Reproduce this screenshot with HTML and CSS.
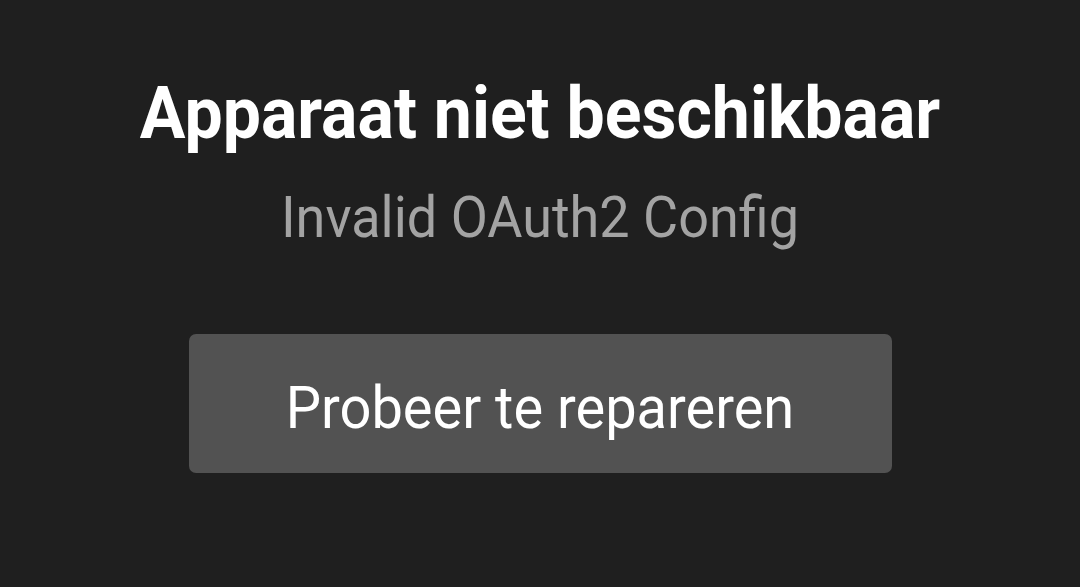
FILE: index.html
```html
<!DOCTYPE html>
<html lang="nl">
<head>
  <meta charset="UTF-8" />
  <meta name="viewport" content="width=device-width, initial-scale=1.0"/>
  <title>Apparaat niet beschikbaar</title>
  <link rel="stylesheet" href="styles.css">
</head>
<body>
  <div class="panel">
    <h1 class="title"><span class="stretch">Apparaat niet beschikbaar</span></h1>
    <p class="reason"><span class="stretch">Invalid OAuth2 Config</span></p>
    <button class="repair"><span class="stretch">Probeer te repareren</span></button>
  </div>
</body>
</html>
```

FILE: styles.css
```css
body {
  margin: 0;
  padding: 0;
  background: #1f1f1f;
  font-family: Roboto, 'Noto Sans', sans-serif;
  height: 100vh;
  overflow: hidden;
}

.panel {
  display: flex;
  flex-direction: column;
  align-items: center;
  padding-top: 74px;
}

.stretch {
  display: inline-block;
  transform: scaleY(1.06);
}

.title {
  margin: 0;
  font-size: 68px;
  font-weight: 700;
  color: #ffffff;
  line-height: 80px;
}

.reason {
  margin: 34px 0 0;
  font-size: 54px;
  color: #a3a3a3;
  line-height: 60px;
}

.repair {
  margin-top: 86px;
  width: 703px;
  height: 139px;
  padding: 8px 0 0;
  background: #525252;
  border: none;
  border-radius: 7px;
  color: #ffffff;
  font-family: inherit;
  font-size: 56px;
}
```
